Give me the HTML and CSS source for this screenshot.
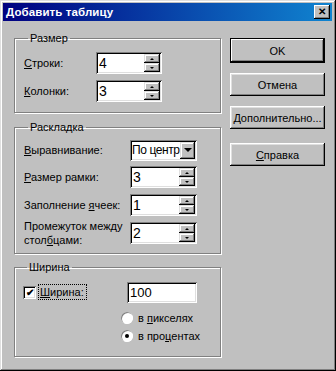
FILE: index.html
```html
<!DOCTYPE html>
<html>
<head>
  <meta charset="UTF-8">
  <title>Добавить таблицу</title>
  <link rel="stylesheet" href="styles.css">
</head>
<body>
<div class="window">
  <div class="titlebar">
    <span class="title">Добавить таблицу</span>
    <span class="close">&#x2715;</span>
  </div>
  <div class="dialog">
    <div class="left">
      <fieldset class="group group-size">
        <legend>Размер</legend>
        <div class="row">
          <label class="lbl"><u>С</u>троки:</label>
          <div class="spin"><span class="val">4</span><span class="arrows"><b class="up"></b><b class="down"></b></span></div>
        </div>
        <div class="row">
          <label class="lbl"><u>К</u>олонки:</label>
          <div class="spin"><span class="val">3</span><span class="arrows"><b class="up"></b><b class="down"></b></span></div>
        </div>
      </fieldset>

      <fieldset class="group group-layout">
        <legend>Раскладка</legend>
        <div class="row first">
          <label class="lbl"><u>В</u>ыравнивание:</label>
          <div class="select"><span class="val">По центр</span><span class="drop"><b></b></span></div>
        </div>
        <div class="row">
          <label class="lbl"><u>Р</u>азмер рамки:</label>
          <div class="spin"><span class="val">3</span><span class="arrows"><b class="up"></b><b class="down"></b></span></div>
        </div>
        <div class="row">
          <label class="lbl">Заполнение <u>я</u>чеек:</label>
          <div class="spin"><span class="val">1</span><span class="arrows"><b class="up"></b><b class="down"></b></span></div>
        </div>
        <div class="row">
          <label class="lbl two">Промежуток между<br>стол<u>б</u>цами:</label>
          <div class="spin"><span class="val">2</span><span class="arrows"><b class="up"></b><b class="down"></b></span></div>
        </div>
      </fieldset>

      <fieldset class="group group-width">
        <legend>Ширина</legend>
        <div class="row">
          <span class="check">&#x2714;</span>
          <label class="lbl focus"><u>Ш</u>ирина:</label>
          <div class="field">100</div>
        </div>
        <div class="radios">
          <div class="radio-row"><span class="radio"></span><span>в <u>п</u>икселях</span></div>
          <div class="radio-row"><span class="radio on"></span><span>в про<u>ц</u>ентах</span></div>
        </div>
      </fieldset>
    </div>

    <div class="buttons">
      <div class="btn default">OK</div>
      <div class="btn">Отмена</div>
      <div class="btn"><u>Д</u>ополнительно...</div>
      <div class="btn help"><u>С</u>правка</div>
    </div>
  </div>
</div>
</body>
</html>
```

FILE: styles.css
```css
body {
  margin: 0;
  padding: 0;
  background: #c0c0c0;
  font-family: 'Liberation Sans', Arial, sans-serif;
  font-size: 11px;
  color: #000;
}
.window {
  width: 336px;
  height: 371px;
  box-sizing: border-box;
  background: #c0c0c0;
  padding: 3px 4px 3px 3px;
  box-shadow: inset -1px -1px #000, inset 1px 1px #dfdfdf, inset -2px -2px #808080, inset 2px 2px #fff;
}
/* заголовок окна */
.titlebar {
  height: 18px;
  display: flex;
  align-items: center;
  justify-content: space-between;
  padding: 0 2px 0 3px;
  background: linear-gradient(90deg, #000080, #1084d0);
}
.title {
  color: #fff;
  font-weight: bold;
  font-size: 11.5px;
  letter-spacing: 0.1px;
}
.close {
  width: 16px;
  height: 14px;
  box-sizing: border-box;
  background: #c0c0c0;
  box-shadow: inset -1px -1px #000, inset 1px 1px #fff, inset -2px -2px #808080;
  font-size: 10px;
  font-weight: bold;
  line-height: 14px;
  text-align: center;
  color: #000;
}
.dialog {
  display: flex;
  padding: 10px 0 0 11px;
}
.left {
  width: 207px;
  display: flex;
  flex-direction: column;
}
.group {
  margin: 0;
  padding: 0 0 0 9px;
  box-sizing: border-box;
  border: 1px solid #808080;
  box-shadow: inset 1px 1px #fff, 1px 1px #fff;
}
.group legend {
  padding: 0 2px;
  margin-left: 4px;
  line-height: 14px;
}
.group-size {
  height: 82px;
  padding-top: 7px;
}
.group-layout {
  height: 134px;
  margin-top: 7px;
  padding-top: 5px;
}
.group-width {
  height: 97px;
  margin-top: 6px;
  padding-top: 7px;
  padding-left: 8px;
}
.row {
  display: flex;
  align-items: center;
  height: 22px;
  margin-bottom: 6px;
}
.row.first {
  margin-bottom: 5px;
}
.lbl {
  width: 72px;
  white-space: nowrap;
}
.group-layout .lbl {
  width: 106px;
}
.lbl.two {
  line-height: 14px;
}
.spin, .select, .field {
  height: 22px;
  box-sizing: border-box;
  background: #fff;
  display: flex;
  align-items: stretch;
  box-shadow: inset 1px 1px #808080, inset -1px -1px #fff, inset 2px 2px #000, inset -2px -2px #dfdfdf;
  padding: 2px;
}
.spin {
  width: 66px;
}
.group-layout .spin, .group-layout .select {
  width: 67px;
}
.group-layout .select {
  height: 21px;
}
.val {
  flex: 1;
  font-size: 14px;
  line-height: 18px;
  padding-left: 1px;
}
.select .val {
  font-size: 12px;
  letter-spacing: -0.4px;
  line-height: 17px;
  white-space: nowrap;
  overflow: hidden;
  padding-left: 0;
}
.arrows {
  width: 16px;
  display: flex;
  flex-direction: column;
}
.arrows b {
  flex: 1;
  background: #c0c0c0;
  box-shadow: inset -1px -1px #000, inset 1px 1px #dfdfdf, inset -2px -2px #808080, inset 2px 2px #fff;
  display: flex;
  align-items: center;
  justify-content: center;
}
.arrows b::after {
  content: "";
  border-left: 2px solid transparent;
  border-right: 2px solid transparent;
}
.arrows .up::after {
  border-bottom: 2px solid #000;
}
.arrows .down::after {
  border-top: 2px solid #000;
}
.drop {
  width: 15px;
  flex: none;
  background: #c0c0c0;
  box-shadow: inset -1px -1px #000, inset 1px 1px #dfdfdf, inset -2px -2px #808080, inset 2px 2px #fff;
  display: flex;
  align-items: center;
  justify-content: center;
}
.drop b {
  border-left: 4px solid transparent;
  border-right: 4px solid transparent;
  border-top: 4px solid #000;
}
.check {
  width: 13px;
  height: 13px;
  box-sizing: border-box;
  background: #fff;
  box-shadow: inset 1px 1px #808080, inset -1px -1px #fff, inset 2px 2px #000, inset -2px -2px #dfdfdf;
  font-size: 10px;
  line-height: 13px;
  text-align: center;
  font-weight: bold;
  margin-right: 3px;
}
.lbl.focus {
  width: 45px;
  outline: 1px dotted #000;
  padding: 1px 1px;
  margin-right: 41px;
}
.field {
  width: 70px;
  height: 21px;
  font-size: 13px;
  line-height: 17px;
  padding-left: 3px;
}
.radios {
  padding-left: 98px;
  margin-top: 2px;
}
.radio-row {
  display: flex;
  align-items: center;
  height: 18px;
  white-space: nowrap;
}
.radio {
  width: 12px;
  height: 12px;
  border-radius: 50%;
  background: #fff;
  box-shadow: inset 1px 1px #808080, inset -1px -1px #fff;
  margin-right: 5px;
  display: flex;
  align-items: center;
  justify-content: center;
}
.radio.on::after {
  content: "";
  width: 4px;
  height: 4px;
  border-radius: 50%;
  background: #000;
}
.buttons {
  margin-left: 9px;
  display: flex;
  flex-direction: column;
  gap: 10px;
  padding-top: 7px;
}
.btn {
  width: 95px;
  height: 23px;
  box-sizing: border-box;
  background: #c0c0c0;
  box-shadow: inset -1px -1px #000, inset 1px 1px #fff, inset -2px -2px #808080, inset 2px 2px #dfdfdf;
  display: flex;
  align-items: center;
  justify-content: center;
  white-space: nowrap;
}
.btn.default {
  height: 25px;
  box-shadow: inset 0 0 0 1px #000, inset -2px -2px #000, inset 2px 2px #fff, inset -3px -3px #808080;
}
.btn.help {
  margin-top: 4px;
}
```
